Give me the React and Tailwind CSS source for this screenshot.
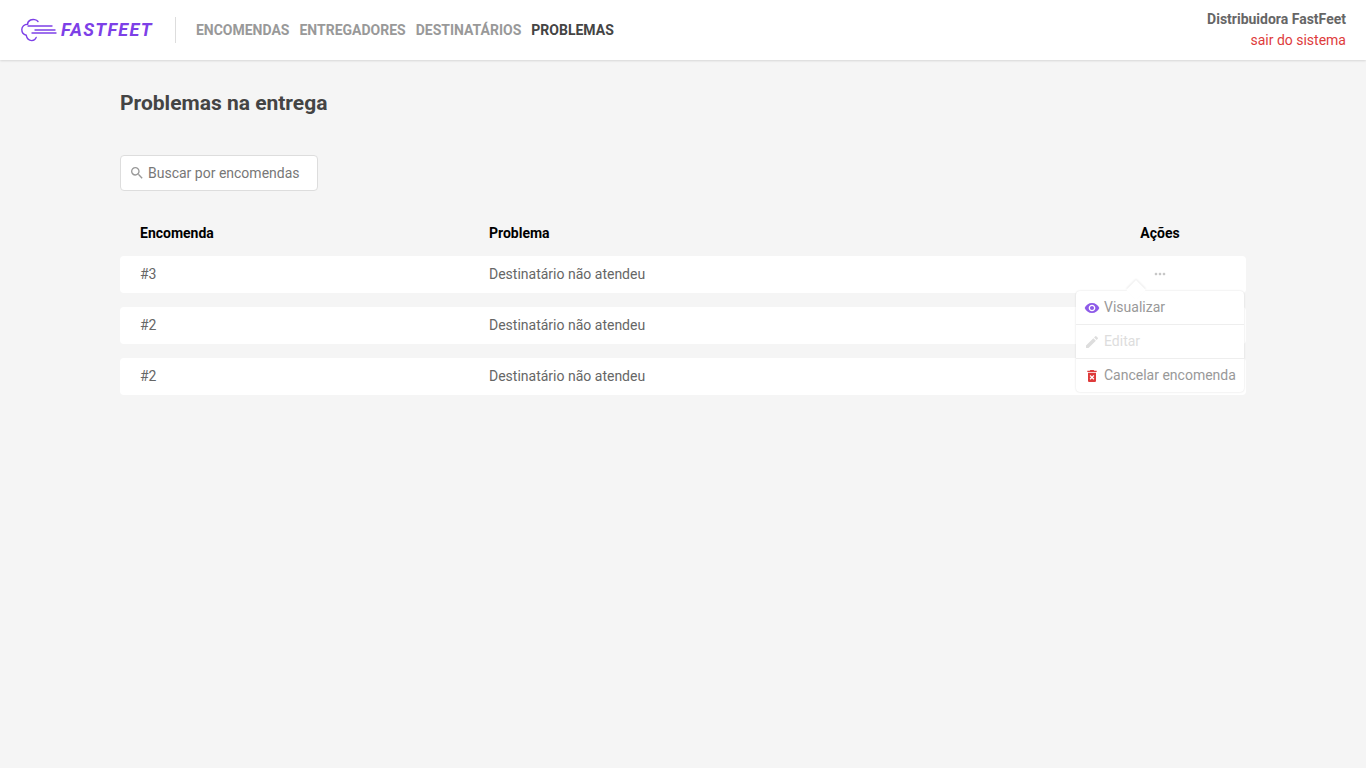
import { MdDeleteForever, MdEdit, MdMoreHoriz, MdSearch, MdVisibility } from "react-icons/md";

const links = ["ENCOMENDAS", "ENTREGADORES", "DESTINATÁRIOS", "PROBLEMAS"];
const rows = ["#3", "#2", "#2"];

const Logo = () => (
  <div className="flex items-center">
    <svg width="38" height="24" viewBox="0 0 38 24" fill="none" stroke="#7d40e7" strokeWidth="1.4" strokeLinecap="round">
      <path d="M18 3.5C16.5 1.6 13 0.9 10.5 2C8.6 2.9 7.6 4.4 7.6 6.2C4.4 6.2 1.8 8.4 1.8 11.5C1.8 14.4 3.6 16.6 6.2 17.2C6.8 20.4 9 22.6 11.8 22.6C14 22.6 15.6 21.2 16.2 19.4" />
      <path d="M8 8H32" />
      <path d="M15 12H35" />
      <path d="M12 15H36" />
    </svg>
    <span className="ml-[3px] text-[18px] leading-none font-bold italic tracking-[1.3px] text-[#7d40e7]">FASTFEET</span>
  </div>
);

const Header = () => (
  <header className="flex h-[60px] items-center justify-between bg-white pl-5 pr-5 shadow-[0_1px_2px_rgba(0,0,0,0.12)]">
    <div className="flex items-center">
      <Logo />
      <div className="mx-[20px] ml-[22px] h-[26px] w-px bg-[#dddddd]" />
      <nav className="flex gap-[10px]">
        {links.map((link) => (
          <a key={link} className={"text-[14px] font-bold " + (link === "PROBLEMAS" ? "text-[#444444]" : "text-[#999999]")}>
            {link}
          </a>
        ))}
      </nav>
    </div>
    <div className="flex flex-col items-end text-[14px] leading-[21px]">
      <strong className="font-bold text-[#666666]">Distribuidora FastFeet</strong>
      <span className="text-[#de3b3b]">sair do sistema</span>
    </div>
  </header>
);

const Actions = () => (
  <div className="absolute right-[2px] top-[35px] z-10 w-[168px] rounded-[4px] bg-white shadow-[0_0_2px_rgba(0,0,0,0.15)]">
    <div className="absolute -top-[8px] left-[53px] h-[14px] w-[14px] rotate-45 bg-white shadow-[-1px_-1px_2px_rgba(0,0,0,0.08)]" />
    <div className="relative flex h-[34px] items-center gap-[4px] border-b border-[#eeeeee] pl-[8px] text-[14px] text-[#999999]">
      <MdVisibility size={16} color="#8e5be8" />
      Visualizar
    </div>
    <div className="flex h-[34px] items-center gap-[4px] border-b border-[#eeeeee] pl-[8px] text-[14px] text-[#dddddd]">
      <MdEdit size={16} color="#dddddd" />
      Editar
    </div>
    <div className="flex h-[33px] items-center gap-[4px] pl-[8px] text-[14px] text-[#999999]">
      <MdDeleteForever size={16} color="#de3b3b" />
      Cancelar encomenda
    </div>
  </div>
);

export default function App() {
  return (
    <div className="min-h-screen bg-[#f5f5f5] font-['Roboto',sans-serif]">
      <Header />
      <main className="px-[120px]">
        <h1 className="pt-[30px] text-[21px] leading-[26px] font-bold text-[#444444]">Problemas na entrega</h1>
        <div className="mt-[39px] flex h-[36px] w-[198px] items-center rounded-[4px] border border-[#dddddd] bg-white pl-[8px] text-[14px] text-[#777777]">
          <MdSearch size={16} color="#999999" />
          <span className="ml-[3px]">Buscar por encomendas</span>
        </div>
        <div className="mt-[21px] flex h-[43px] items-center pl-5 text-[14px] font-bold text-black">
          <span className="w-[349px]">Encomenda</span>
          <span className="flex-1">Problema</span>
          <span className="w-[172px] text-center">Ações</span>
        </div>
        <div className="flex flex-col gap-[14px] pt-px">
          {rows.map((id, i) => (
            <div key={i} className="relative flex h-[37px] items-center rounded-[4px] bg-white pl-5 text-[14px] text-[#666666]">
              <span className="w-[349px]">{id}</span>
              <span className="flex-1">Destinatário não atendeu</span>
              <span className="flex w-[172px] justify-center pb-[2px]">
                {i === 0 && <MdMoreHoriz size={16} color="#c6c6c6" />}
              </span>
              {i === 0 && <Actions />}
            </div>
          ))}
        </div>
      </main>
    </div>
  );
}
